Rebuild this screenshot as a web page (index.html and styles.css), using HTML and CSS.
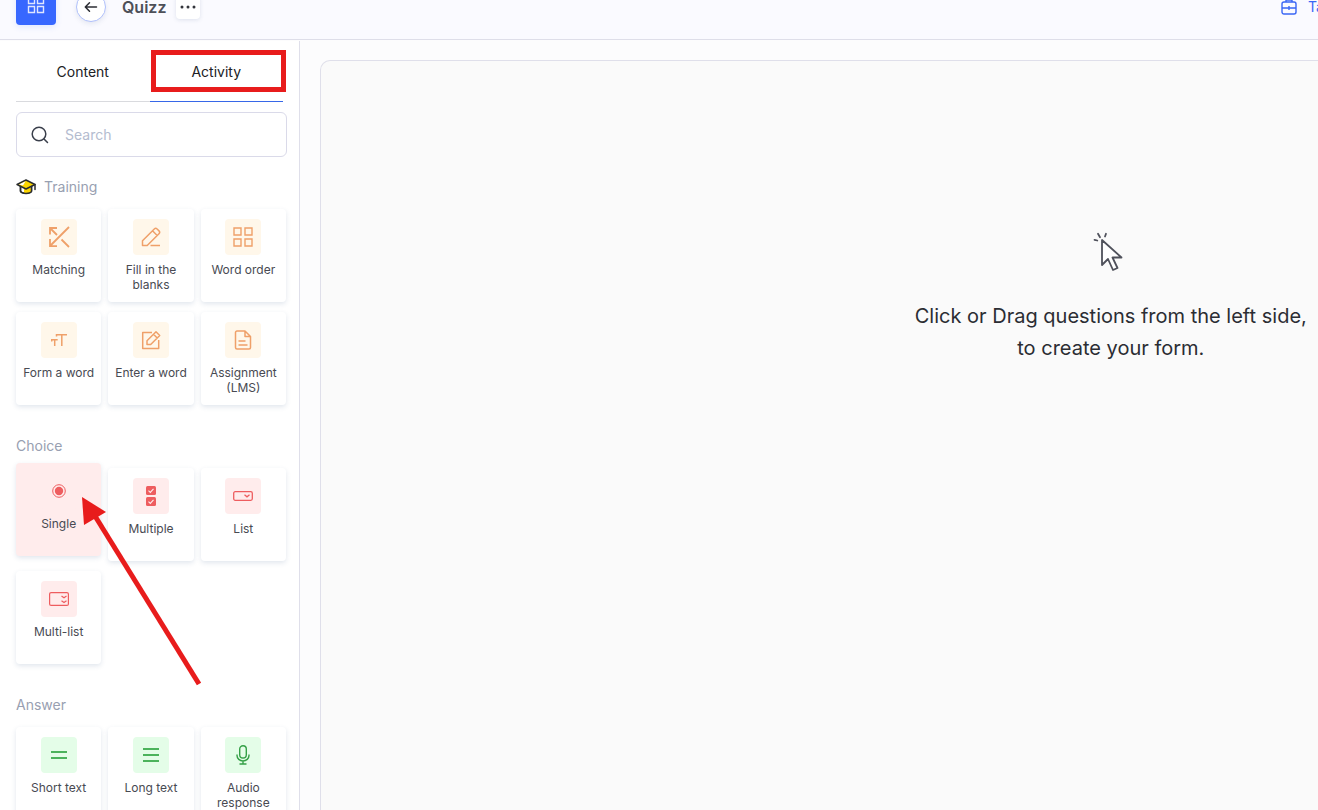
FILE: index.html
```html
<!DOCTYPE html>
<html lang="en">
<head>
<meta charset="utf-8">
<meta name="viewport" content="width=device-width, initial-scale=1">
<title>Quizz</title>
<link rel="stylesheet" href="styles.css">
</head>
<body>
<div class="app">
  <header class="topbar">
    <div class="topbar-row">
      <button class="launcher" type="button" aria-label="Apps">
        <svg width="18" height="18" viewBox="0 0 18 18" fill="none" stroke="#dfe6ff" stroke-width="1.4"><path d="M1.5 1.5h6v6h-6zM10.500 1.500h6v6h-6zM1.500 10.500h6v6h-6zM10.500 10.500h6v6h-6z"/></svg>
      </button>
      <button class="back" type="button" aria-label="Back">
        <svg width="14" height="12" viewBox="0 0 14 12" fill="none" stroke="#2b2d33" stroke-width="1.5" stroke-linecap="round" stroke-linejoin="round"><path d="M12.500 6H1.500M5.500 1.800L1.300 6l4.200 4.200"/></svg>
      </button>
      <h1 class="doc-title">Quizz</h1>
      <button class="more" type="button" aria-label="More">
        <svg width="16" height="4" viewBox="0 0 16 4" fill="#33353b"><circle cx="2" cy="2" r="1.500"/><circle cx="8" cy="2" r="1.500"/><circle cx="14" cy="2" r="1.500"/></svg>
      </button>
      <a class="top-link" href="#">
        <svg width="16" height="16" viewBox="0 0 16 16" fill="none" stroke="#3a66f5" stroke-width="1.400"><rect x="1" y="3" width="14" height="12" rx="2"/><path d="M5 3V1h6v2M1 9h14M8 7v4"/></svg>
        <span>Ta</span>
      </a>
    </div>
  </header>

  <div class="body">
    <aside class="sidebar">
      <div class="tabs" role="tablist">
        <button class="tab" type="button" role="tab" aria-selected="false">Content</button>
        <button class="tab tab-active" type="button" role="tab" aria-selected="true">Activity<span class="highlight"></span></button>
      </div>
      <label class="search">
        <svg width="18" height="18" viewBox="0 0 18 18" fill="none" stroke="#3a3f4b" stroke-width="1.500" stroke-linecap="round"><circle cx="8" cy="8" r="6.800"/><path d="M13 13l3.500 3.500"/></svg>
        <input type="text" placeholder="Search" aria-label="Search">
      </label>

      <section class="group">
        <h2 class="group-title">
          <svg width="20" height="16" viewBox="0 0 20 16" stroke="#2b2d2f" stroke-width="1.500" stroke-linejoin="round" stroke-linecap="round"><path d="M4.500 7v5c1 3 10 3 11 0V7" fill="#fff"/><path d="M8 9h7v4c-2 1.500-5 1.500-7 1z" fill="#fbd500" stroke="none"/><path d="M1 5.500L10 1l9 4.500-9 4.500z" fill="#fbd500"/><path d="M3 5.500L9.500 2.300 7 6.500z" fill="#fff" stroke="none"/><path d="M4.500 7.500v4.800c1.500 2.800 9.500 2.800 11 0V7.500M19 5.500v5" fill="none"/></svg>
          Training
        </h2>
        <div class="cards">
          <button class="card training" type="button"><span class="tile"><svg width="22" height="22" viewBox="0 0 22 22" fill="none" stroke="currentColor" stroke-width="1.800"><path d="M21 1L2 20M2 13v7.200h7M2 8.500V2h7M2 2l7 7M13.500 13.500L21 21"/></svg></span>Matching</button>
          <button class="card training" type="button"><span class="tile"><svg width="20" height="20" viewBox="0 0 20 20" fill="none" stroke="currentColor" stroke-width="1.500" stroke-linejoin="round"><path d="M1.500 18.500v-4.700L13.300 2a2 2 0 0 1 2.800 0l1.900 1.900a2 2 0 0 1 0 2.800L6.200 18.500zM11.500 3.800l4.700 4.700M9.500 18.500H19"/></svg></span>Fill in the blanks</button>
          <button class="card training" type="button"><span class="tile"><svg width="20" height="20" viewBox="0 0 20 20" fill="none" stroke="currentColor" stroke-width="1.400"><path d="M1 1h7v7H1zM12 1h7v7h-7zM1 12h7v7H1zM12 12h7v7h-7z"/></svg></span>Word order</button>
          <button class="card training" type="button"><span class="tile"><svg width="16" height="12" viewBox="0 0 16 12" fill="none" stroke="currentColor" stroke-width="1.500"><path d="M5.500 2.500V.8H16M10.800.8V12M.7 7.500V5.800h6M3.700 5.800V12"/></svg></span>Form a word</button>
          <button class="card training" type="button"><span class="tile"><svg width="20" height="20" viewBox="0 0 20 20" fill="none" stroke="currentColor" stroke-width="1.500" stroke-linejoin="round"><path d="M11 2.500H1.700v16h16V10M6 14.500v-3.700l9-9 3.700 3.700-9 9zM12.500 4.300L16.200 8"/></svg></span>Enter a word</button>
          <button class="card training" type="button"><span class="tile"><svg width="18" height="20" viewBox="0 0 18 20" fill="none" stroke="currentColor" stroke-width="1.500" stroke-linejoin="round"><path d="M11 1H3a1.500 1.500 0 0 0-1.500 1.500v15A1.500 1.500 0 0 0 3 19h12a1.500 1.500 0 0 0 1.500-1.500V6.500zM11 1v5.500h5.500M4.500 11h7M4.500 15h9"/></svg></span>Assignment (LMS)</button>
        </div>
      </section>

      <section class="group">
        <h2 class="group-title">Choice</h2>
        <div class="cards">
          <button class="card choice card-hover" type="button"><span class="tile"><svg width="14" height="14" viewBox="0 0 14 14" fill="none" stroke="currentColor"><circle cx="7" cy="7" r="6.300"/><circle cx="7" cy="7" r="4.200" fill="currentColor" stroke="none"/></svg></span>Single</button>
          <button class="card choice" type="button"><span class="tile"><svg width="10" height="20" viewBox="0 0 10 20" fill="none" stroke="#ffecec" stroke-width="1.100"><rect width="10" height="9" rx="1.500" fill="#ee5d5f" stroke="none"/><rect y="11" width="10" height="9" rx="1.500" fill="#ee5d5f" stroke="none"/><path d="M2.500 4.700l1.800 1.700 3.200-3.600M2.500 15.700l1.800 1.700 3.200-3.600"/></svg></span>Multiple</button>
          <button class="card choice" type="button"><span class="tile"><svg width="20" height="10" viewBox="0 0 20 10" fill="none" stroke="currentColor" stroke-width="1.300"><rect x=".7" y=".7" width="18.600" height="8.600" rx="1.500"/><path d="M11.500 3.800l2.500 2 2.500-2"/></svg></span>List</button>
          <button class="card choice" type="button"><span class="tile"><svg width="20" height="14" viewBox="0 0 20 14" fill="none" stroke="currentColor" stroke-width="1.200"><rect x=".6" y=".6" width="18.800" height="12.800" rx="1.500"/><path d="M12.500 4l2.500 1.800L17.500 4M12.500 8.700l2.500 1.800 2.500-1.800"/></svg></span>Multi-list</button>
        </div>
      </section>

      <section class="group">
        <h2 class="group-title">Answer</h2>
        <div class="cards">
          <button class="card answer" type="button"><span class="tile"><svg width="16" height="8" viewBox="0 0 16 8" stroke="#4cb35c" stroke-width="2"><path d="M0 1h16M0 7h16"/></svg></span>Short text</button>
          <button class="card answer" type="button"><span class="tile"><svg width="16" height="14" viewBox="0 0 16 14" stroke="#4cb35c" stroke-width="2"><path d="M0 1h16M0 7h16M0 13h16"/></svg></span>Long text</button>
          <button class="card answer" type="button"><span class="tile"><svg width="14" height="20" viewBox="0 0 14 20" fill="none" stroke="currentColor" stroke-width="1.400"><rect x="3.700" y=".8" width="6.600" height="12.200" rx="3.300"/><path d="M1 9.500v1a6 5.500 0 0 0 12 0v-1M7 16v3M3.500 19h7"/></svg></span>Audio response</button>
        </div>
      </section>

      <svg class="pointer" width="120" height="192" viewBox="0 0 120 192" aria-hidden="true"><path d="M13 20L117 188" stroke="#e81c1c" stroke-width="5"/><path d="M0 1l24 15-22 13z" fill="#e81c1c"/></svg>
    </aside>

    <main class="workspace">
      <div class="canvas">
        <svg width="38" height="40" viewBox="0 0 38 40" fill="none" stroke="#4f515b" stroke-width="1.800" stroke-linejoin="round" stroke-linecap="round"><path d="M10 8v25l6-6 5 11 4.500-2-5-10.500h9z" fill="#fff"/><path d="M6 1.800l2 3.400M14 1.800l-1 2.700M2.500 7.800l2.800.7"/></svg>
        <p class="hint">Click or Drag questions from the left side,<br>to create your form.</p>
      </div>
    </main>
  </div>
</div>
</body>
</html>
```
FILE: styles.css
```css
* { box-sizing: border-box; }

body {
  margin: 0;
  background: #fcfcfd;
  color: #2b2d33;
  font-family: Inter, "Liberation Sans", sans-serif;
  font-size: 14px;
}

button {
  padding: 0;
  border: 0;
  background: none;
  color: inherit;
  font: inherit;
  cursor: pointer;
}

svg { flex: none; display: block; }

.app {
  display: flex;
  flex-direction: column;
  height: 100vh;
  overflow: hidden;
}

/* Top bar, scrolled partly out of view */
.topbar {
  flex: none;
  overflow: hidden;
  background: #fafaff;
  border-bottom: 1px solid #dedee9;
}

.topbar-row {
  display: flex;
  align-items: center;
  height: 64px;
  margin-top: -25px;
  padding-left: 16px;
}

.launcher, .back, .more {
  display: flex;
  align-items: center;
  justify-content: center;
}

.launcher {
  width: 40px;
  height: 40px;
  margin: 0 20px 4px 0;
  border-radius: 4px;
  background: #3767ff;
  box-shadow: 0 2px 6px #3767ff22;
}

.back {
  width: 30px;
  height: 30px;
  border: 1px solid #b0c0fb;
  border-radius: 50%;
  background: #fff;
  box-shadow: 0 2px 5px #28407a1a;
}

.doc-title {
  margin: 0 10px 0 16px;
  color: #4d4f58;
  font-size: 16px;
  font-weight: 600;
  line-height: 14px;
}

.more {
  width: 24px;
  height: 24px;
  border-radius: 4px;
  background: #fff;
  box-shadow: 0 1px 4px #28407a22;
}

.top-link {
  display: flex;
  flex: none;
  align-items: center;
  gap: 11px;
  width: 37px;
  margin-left: auto;
  color: #3a66f5;
  line-height: 14px;
  text-decoration: none;
}

.body {
  display: flex;
  flex: 1;
  min-height: 0;
  padding-top: 1px;
}

/* Sidebar */
.sidebar {
  position: relative;
  flex: none;
  width: 300px;
  padding: 0 12px 0 16px;
  overflow: hidden;
  border-right: 1px solid #dfdfea;
  background: #fff;
}

.tabs {
  display: flex;
  margin-right: 4px;
}

.tab {
  position: relative;
  flex: 1;
  height: 61px;
  padding-top: 2px;
  border-bottom: 1px solid #d9dade;
  color: #202124;
  line-height: 20px;
}

.tab-active { border-bottom-color: #3767e8; }

.highlight {
  position: absolute;
  inset: 9px -3px 9px 1px;
  border: 5px solid #e81c1c;
}

.search {
  display: flex;
  align-items: center;
  gap: 16px;
  height: 45px;
  margin-top: 10px;
  padding: 0 14px;
  border: 1px solid #dadae9;
  border-radius: 6px;
}

.search input {
  flex: 1;
  min-width: 0;
  padding: 0;
  border: 0;
  outline: 0;
  background: none;
  font: inherit;
}

.search input::placeholder { color: #b4bccf; opacity: 1; }

.group { margin-top: 31px; }

.search + .group { margin-top: 20px; }

.group-title {
  display: flex;
  align-items: center;
  gap: 8px;
  margin: 0 0 12px;
  color: #98a0b1;
  font-size: 14px;
  font-weight: 400;
  line-height: 20px;
}

.cards {
  display: grid;
  grid-template-columns: repeat(3, 1fr);
  gap: 10px 7px;
  margin-right: 1px;
}

.card {
  display: flex;
  flex-direction: column;
  align-items: center;
  height: 93px;
  padding: 10px 6px 0;
  border-radius: 4px;
  background: #fff;
  box-shadow: 0 2px 5px #33558826;
  color: #484a52;
  font-size: 12px;
  line-height: 15px;
  text-align: center;
}

.tile {
  display: flex;
  flex: none;
  align-items: center;
  justify-content: center;
  width: 36px;
  height: 36px;
  margin-bottom: 7px;
  border-radius: 4px;
}

.training .tile { background: #fff7ea; color: #efa069; }
.choice .tile { background: #ffecec; color: #ee5d5f; }
.answer .tile { background: #e4fde8; color: #35a047; }

.card-hover {
  background: #ffecec;
  transform: translateY(-5px);
}

.pointer {
  position: absolute;
  top: 455px;
  left: 82px;
  pointer-events: none;
}

/* Workspace: the canvas runs past the right edge of the window */
.workspace {
  flex: 1;
  min-width: 0;
  padding: 19px 0 0 20px;
  overflow: hidden;
}

.canvas {
  display: flex;
  flex-direction: column;
  align-items: center;
  width: 120vw;
  height: 100%;
  padding-top: 171px;
  border: 1px solid #dfdfea;
  border-bottom: 0;
  border-radius: 10px 10px 0 0;
  background: #fafafa;
}

.hint {
  margin: 28px 0 0;
  font-size: 20px;
  line-height: 32px;
  text-align: center;
}
```
